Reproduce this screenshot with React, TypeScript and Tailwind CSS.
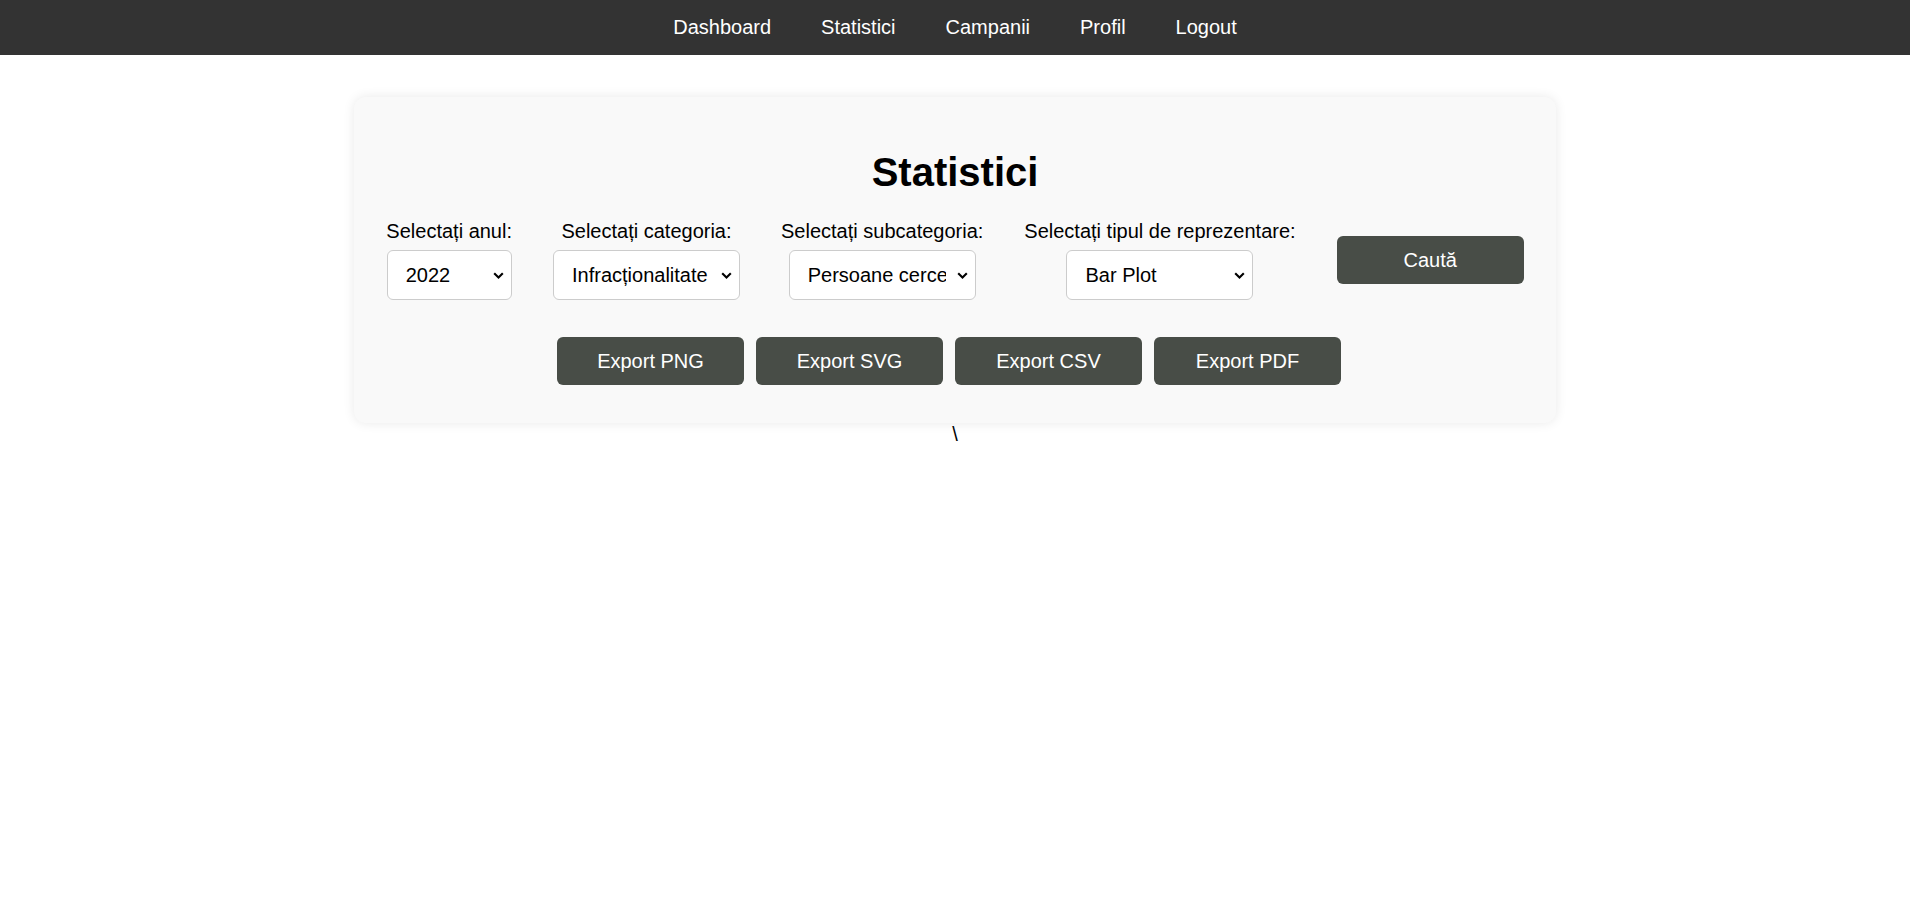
import { useState } from 'react'

const navLinks = ['Dashboard', 'Statistici', 'Campanii', 'Profil', 'Logout']
const exportButtons = ['Export PNG', 'Export SVG', 'Export CSV', 'Export PDF']

function Select({
  value,
  onChange,
  width,
  options,
}: {
  value: string
  onChange: (v: string) => void
  width: string
  options: { value: string; label: string }[]
}) {
  return (
    <div className={`relative flex h-[50px] items-center overflow-hidden rounded-[6px] border border-[#cccccc] bg-white ${width}`}>
      <select
        value={value}
        onChange={e => onChange(e.target.value)}
        className="h-full min-w-0 flex-1 appearance-none bg-transparent pl-[18px] text-[20px] text-black outline-none"
      >
        {options.map(o => (
          <option key={o.value} value={o.value}>
            {o.label}
          </option>
        ))}
      </select>
      {/* chevron */}
      <div className="pointer-events-none flex w-[29px] shrink-0 items-center justify-start pl-[11px]">
        <svg width="11" height="7" viewBox="0 0 11 7" fill="none">
          <path d="M1.2 1.2 L5.5 5.5 L9.8 1.2" stroke="#000" strokeWidth="2.1" />
        </svg>
      </div>
    </div>
  )
}

export default function App() {
  const [year, setYear] = useState('2022')
  const [category, setCategory] = useState('infractionalitate')
  const [subcategory, setSubcategory] = useState('persoane')
  const [chart, setChart] = useState('bar')

  const labelCls = 'mb-[7px] whitespace-nowrap text-[20px] leading-[23px]'

  return (
    <div className="min-h-screen bg-white font-['Liberation_Sans',Arial,sans-serif] text-black">
      {/* Nav */}
      <nav className="flex justify-center bg-[#333333]">
        {navLinks.map(link => (
          <a key={link} href="#" className="px-[25px] py-4 text-[20px] leading-[23px] text-white">
            {link}
          </a>
        ))}
      </nav>

      {/* Card */}
      <div className="mx-auto mt-[42px] w-[1202px] rounded-[12px] bg-[#f9f9f9] px-[25px] pt-[25px] pb-[25px] shadow-[0_0_12px_rgba(0,0,0,0.09)]">
        <h1 className="mt-[27px] mb-[25px] text-center text-[40px] font-bold leading-[46px]">Statistici</h1>

        <div className="flex items-center justify-center gap-[41px]">
          <div className="flex shrink-0 flex-col items-center">
            <label className={labelCls}>Selectați anul:</label>
            <Select
              value={year}
              onChange={setYear}
              width="w-[125px]"
              options={[
                { value: '2022', label: '2022' },
                { value: '2021', label: '2021' },
                { value: '2020', label: '2020' },
              ]}
            />
          </div>
          <div className="flex shrink-0 flex-col items-center">
            <label className={labelCls}>Selectați categoria:</label>
            <Select
              value={category}
              onChange={setCategory}
              width="w-[187px]"
              options={[{ value: 'infractionalitate', label: 'Infracționalitate' }]}
            />
          </div>
          <div className="flex shrink-0 flex-col items-center">
            <label className={labelCls}>Selectați subcategoria:</label>
            <Select
              value={subcategory}
              onChange={setSubcategory}
              width="w-[187px]"
              options={[{ value: 'persoane', label: 'Persoane cercetate' }]}
            />
          </div>
          <div className="flex shrink-0 flex-col items-center">
            <label className={labelCls}>Selectați tipul de reprezentare:</label>
            <Select
              value={chart}
              onChange={setChart}
              width="w-[187px]"
              options={[
                { value: 'bar', label: 'Bar Plot' },
                { value: 'line', label: 'Line Plot' },
                { value: 'pie', label: 'Pie Chart' },
              ]}
            />
          </div>
          <button className="h-[48px] w-[187px] shrink-0 rounded-[6px] bg-[#484d47] text-[20px] text-white">Caută</button>
        </div>

        <div className="mt-[37px] mb-[13px] flex justify-center">
          {exportButtons.map(b => (
            <button key={b} className="mr-[12px] h-[48px] w-[187px] rounded-[6px] bg-[#484d47] text-[20px] text-white">
              {b}
            </button>
          ))}
        </div>
      </div>

      <div className="text-center text-[20px] leading-[23px]">\</div>
    </div>
  )
}
